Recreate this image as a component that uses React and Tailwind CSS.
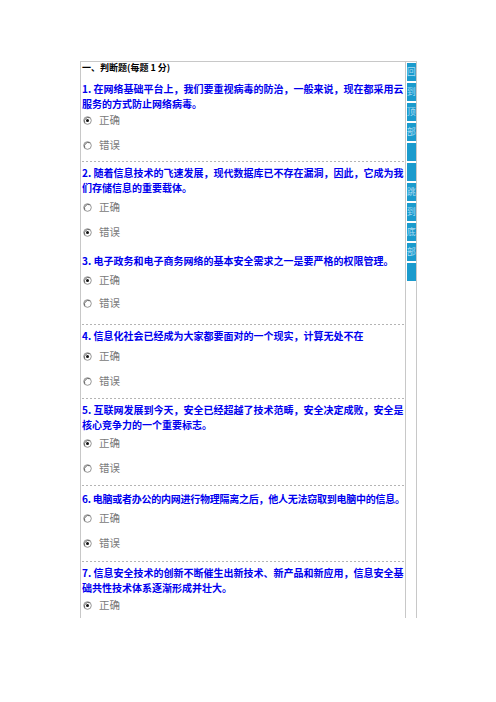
import React from "react";

const font = { fontFamily: '"Noto Sans CJK SC", "Noto Sans", sans-serif' };

function Radio({ checked }) {
  return (
    <svg width="9" height="9" viewBox="0 0 9 9" className="shrink-0">
      <circle cx="4.5" cy="4.5" r="3.8" fill="#fff" stroke="#8a8a8a" strokeWidth="0.9" />
      <path d="M1.8 6.8 A3.8 3.8 0 0 1 6.8 1.8" fill="none" stroke="#5a5a5a" strokeWidth="0.9" />
      {checked && <circle cx="4.5" cy="4.5" r="1.5" fill="#111" />}
    </svg>
  );
}

function Option({ label, checked, className }) {
  return (
    <div className={`flex items-center h-[18px] pl-px ${className}`}>
      <Radio checked={checked} />
      <span className="ml-[7px] text-[10.5px] leading-[18px] text-[#7a7a7a]">{label}</span>
    </div>
  );
}

function Title({ lines, className }) {
  return (
    <div className={`text-[10px] leading-[15px] font-bold text-[#0000ee] whitespace-nowrap ${className}`}>
      {lines.map((l, i) => (
        <div key={i}>{l}</div>
      ))}
    </div>
  );
}

function Sep({ className }) {
  return (
    <div
      className={`h-px w-full bg-[repeating-linear-gradient(90deg,#b4b4b4_0_2px,transparent_2px_4px)] ${className}`}
    />
  );
}

const sideBlocks = ["回", "到", "顶", "部", "", "", "跳", "到", "底", "部", ""];

export default function App() {
  return (
    <div className="w-[496px] h-[702px] bg-white" style={font}>
      <div className="pt-[61px] pl-[80px]">
        <div className="flex w-[337px] h-[557px] border-t border-l border-r border-[#c8c8c8]">
          {/* 题目区 */}
          <div className="w-[325px] border-r border-[#c8c8c8] pl-px">
            <div className="text-[9px] leading-[12px] font-bold text-black">一、判断题(每题 1 分)</div>

            <Title className="mt-[7px]" lines={["1. 在网络基础平台上，我们要重视病毒的防治，一般来说，现在都采用云", "服务的方式防止网络病毒。"]} />
            <Option label="正确" checked />
            <Option label="错误" className="mt-[7px]" />
            <Sep className="mt-[7px]" />

            <Title className="mt-[3px]" lines={["2. 随着信息技术的飞速发展，现代数据库已不存在漏洞，因此，它成为我", "们存储信息的重要载体。"]} />
            <Option label="正确" className="mt-[3px]" />
            <Option label="错误" checked className="mt-[7px]" />

            <Title className="mt-[12px]" lines={["3. 电子政务和电子商务网络的基本安全需求之一是要严格的权限管理。"]} />
            <Option label="正确" checked className="mt-[3px]" />
            <Option label="错误" className="mt-[5px]" />
            <Sep className="mt-[12px]" />

            <Title className="mt-[3px]" lines={["4. 信息化社会已经成为大家都要面对的一个现实，计算无处不在"]} />
            <Option label="正确" checked className="mt-[4px]" />
            <Option label="错误" className="mt-[7px]" />
            <Sep className="mt-[8px]" />

            <Title className="mt-[3px]" lines={["5. 互联网发展到今天，安全已经超越了技术范畴，安全决定成败，安全是", "核心竞争力的一个重要标志。"]} />
            <Option label="正确" checked className="mt-[2px]" />
            <Option label="错误" className="mt-[7px]" />
            <Sep className="mt-[8px]" />

            <Title className="mt-[5px] tracking-[-0.25px]" lines={["6. 电脑或者办公的内网进行物理隔离之后，他人无法窃取到电脑中的信息。"]} />
            <Option label="正确" className="mt-[3px]" />
            <Option label="错误" checked className="mt-[7px]" />
            <Sep className="mt-[9px]" />

            <Title className="mt-[3px]" lines={["7. 信息安全技术的创新不断催生出新技术、新产品和新应用，信息安全基", "础共性技术体系逐渐形成并壮大。"]} />
            <Option label="正确" checked className="mt-[1px]" />
          </div>

          {/* 侧边导航 */}
          <div className="w-[11px] pt-px pl-px">
            {sideBlocks.map((c, i) => (
              <div
                key={i}
                className="w-[9px] h-[18px] mb-[2px] bg-[#1b9bcd] overflow-hidden flex items-center justify-center text-[9px] leading-[18px] text-[#a9daf2]"
              >
                {c}
              </div>
            ))}
          </div>
        </div>
      </div>
    </div>
  );
}
